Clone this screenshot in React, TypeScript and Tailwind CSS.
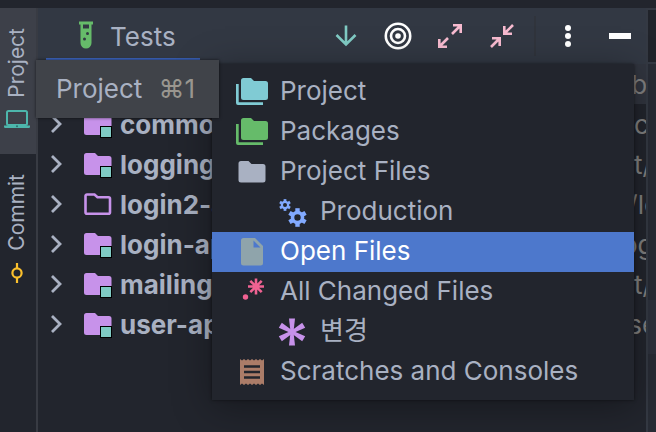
import { clsx } from "clsx"
import type { ReactNode } from "react"

const PurpleFolderIcon = ({ isOutlined = false }: { isOutlined?: boolean }) => (
  <svg width="28" height="28" viewBox="0 0 28 28" className="shrink-0" aria-hidden="true">
    {isOutlined ? (
      <path
        d="M1.500 6a1.500 1.500 0 0 1 1.500-1.500h7.500l3 2.700H24.500a1.500 1.500 0 0 1 1.500 1.500v13.500a1.500 1.500 0 0 1-1.500 1.500H3a1.500 1.500 0 0 1-1.500-1.500z"
        fill="none"
        stroke="#c792ea"
        strokeWidth="2.600"
      />
    ) : (
      <>
        <path
          d="M0 5.500a2.500 2.500 0 0 1 2.500-2.500H11l3 3h11a2.500 2.500 0 0 1 2.500 2.500v14a2.500 2.500 0 0 1-2.500 2.500H2.500a2.500 2.500 0 0 1-2.500-2.500z"
          fill="#c792ea"
        />
        <rect x="16.500" y="16.500" width="11" height="11" fill="#80cbc4" stroke="#000" />
      </>
    )}
  </svg>
)

const StackedFoldersIcon = ({ color }: { color: string }) => (
  <svg width="32" height="32" viewBox="0 0 32 32" fill={color} aria-hidden="true">
    <path d="M5 4.500A2.500 2.500 0 0 1 7.500 2H15l3 3h11.500A2.500 2.500 0 0 1 32 7.500v14a2.500 2.500 0 0 1-2.500 2.500h-22A2.500 2.500 0 0 1 5 21.500z" />
    <path d="M0 8h2.700v18.300H27V29H2a2 2 0 0 1-2-2z" />
  </svg>
)

const PlainFolderIcon = () => (
  <svg width="32" height="32" viewBox="0 0 32 32" fill="#a9b1c2" aria-hidden="true">
    <path d="M2.500 7.500A2.500 2.500 0 0 1 5 5h7.500l3 3H27a2.500 2.500 0 0 1 2.500 2.500V24a2.500 2.500 0 0 1-2.500 2.500H5A2.500 2.500 0 0 1 2.500 24z" />
  </svg>
)

const Gear = ({ x, y, scale }: { x: number; y: number; scale: number }) => (
  <g transform={`translate(${x} ${y}) scale(${scale})`} stroke="#82aaff" fill="none">
    <circle r="5" strokeWidth="3.600" />
    {[0, 60, 120, 180, 240, 300].map((angle) => (
      <path key={angle} d="M0-5.500V-9.300" strokeWidth="4.400" transform={`rotate(${angle})`} />
    ))}
  </g>
)

const GearsIcon = () => (
  <svg width="32" height="32" viewBox="0 0 32 32" aria-hidden="true">
    <Gear x={9} y={9} scale={0.63} />
    <Gear x={21.5} y={21.5} scale={1} />
  </svg>
)

const FileIcon = () => (
  <svg width="32" height="32" viewBox="0 0 32 32" fill="#8fa4ab" aria-hidden="true">
    <path
      fillRule="evenodd"
      d="M5 4.500A2.500 2.500 0 0 1 7.500 2H19l8 8v17a2.500 2.500 0 0 1-2.500 2.500h-17A2.500 2.500 0 0 1 5 27zM17.500 4.500V11.500H24.500z"
    />
  </svg>
)

const ChangedFilesIcon = () => (
  <svg width="32" height="32" viewBox="0 0 32 32" aria-hidden="true">
    <g stroke="#f06292" strokeWidth="2.600">
      <path d="M20 2.500v16M12 10.500h16M14.300 4.800l11.400 11.400M25.700 4.800L14.300 16.200" />
    </g>
    <circle cx="9.500" cy="21" r="2.700" fill="#f06292" />
  </svg>
)

const AsteriskIcon = () => (
  <svg width="32" height="32" viewBox="0 0 32 32" fill="#c792ea" aria-hidden="true">
    {[0, 60, 120, 180, 240, 300].map((angle) => (
      <path key={angle} d="M14.500 16L13 2.500h6L17.500 16z" transform={`rotate(${angle} 16 16)`} />
    ))}
  </svg>
)

const ReceiptIcon = () => (
  <svg width="32" height="32" viewBox="0 0 32 32" aria-hidden="true">
    <path
      fill="#ab7c68"
      d="M4 3l2 1.500L8 3l2 1.500L12 3l2 1.500L16 3l2 1.500L20 3l2 1.500L24 3l2 1.500L28 3v26l-2-1.500L24 29l-2-1.500L20 29l-2-1.500L16 29l-2-1.500L12 29l-2-1.500L8 29l-2-1.500L4 29z"
    />
    <path d="M8 10.500h16M8 16h16M8 21.500h16" stroke="#22252d" strokeWidth="2.400" />
  </svg>
)

const TestTubeIcon = () => (
  <svg width="16" height="28" viewBox="0 0 16 28" aria-hidden="true">
    <path
      fill="#66bb6a"
      fillRule="evenodd"
      d="M1 .5h14v3h-1.500V22a5.500 5.500 0 0 1-11 0V3.500H1zM5 3.500v4h6v-4z"
    />
    <circle cx="9.500" cy="12.500" r="1.500" fill="#323843" />
    <circle cx="6.500" cy="18" r="1.500" fill="#323843" />
  </svg>
)

const LaptopIcon = () => (
  <svg width="26" height="20" viewBox="0 0 26 20" aria-hidden="true">
    <rect x="3" y="1" width="20" height="14" rx="1.500" fill="none" stroke="#4db6ac" strokeWidth="2" />
    <path d="M0 15.500h26v1.200a1.200 1.200 0 0 1-1.200 1.200H1.200A1.200 1.200 0 0 1 0 16.700z" fill="#4db6ac" />
    <circle cx="13" cy="16.300" r="1" fill="#2b6f6c" />
  </svg>
)

const CommitIcon = () => (
  <svg width="20" height="20" viewBox="0 0 20 20" fill="none" stroke="#fbc02d" strokeWidth="2.200" aria-hidden="true">
    <circle cx="10" cy="10" r="4.600" />
    <path d="M10 0v5.400M10 14.600V20" />
  </svg>
)

const ChevronIcon = () => (
  <svg width="12" height="20" viewBox="0 0 12 20" fill="none" stroke="#a9b1c2" strokeWidth="2.800" aria-hidden="true">
    <path d="M2 2l8 8-8 8" />
  </svg>
)

const ArrowDownIcon = () => (
  <svg width="24" height="24" viewBox="0 0 24 24" fill="none" stroke="#80cbc4" strokeWidth="2.600" aria-hidden="true">
    <path d="M12 1.500v19M2.500 11l9.500 9.500 9.500-9.500" />
  </svg>
)

const TargetIcon = () => (
  <svg width="28" height="28" viewBox="0 0 28 28" fill="none" stroke="#fff" strokeWidth="2.600" aria-hidden="true">
    <circle cx="14" cy="14" r="12.200" />
    <circle cx="14" cy="14" r="7" />
    <circle cx="14" cy="14" r="2.800" fill="#fff" stroke="none" />
  </svg>
)

const ExpandIcon = () => (
  <svg width="24" height="24" viewBox="0 0 24 24" fill="none" stroke="#f8bbd0" strokeWidth="2.600" aria-hidden="true">
    <path d="M15 1.300h7.700V9M22 2l-8 8M1.300 15v7.700H9M2 22l8-8" />
  </svg>
)

const CollapseIcon = () => (
  <svg width="24" height="24" viewBox="0 0 24 24" fill="none" stroke="#f8bbd0" strokeWidth="2.600" aria-hidden="true">
    <path d="M14.300 2v7.700H22M15 9l8-8M2 14.300h7.700V22M9 15l-8 8" />
  </svg>
)

const MoreIcon = () => (
  <svg width="24" height="24" viewBox="0 0 24 24" fill="#fff" aria-hidden="true">
    <circle cx="12" cy="4" r="3" />
    <circle cx="12" cy="12" r="3" />
    <circle cx="12" cy="20" r="3" />
  </svg>
)

const MinimizeIcon = () => (
  <svg width="24" height="24" viewBox="0 0 24 24" fill="#fff" aria-hidden="true">
    <path d="M1 9h22v6H1z" />
  </svg>
)

type ToolButtonProps = { label: string; icon: ReactNode }

const ToolButton = ({ label, icon }: ToolButtonProps) => (
  <button type="button" aria-label={label} className="flex h-full w-13 items-center justify-center">
    {icon}
  </button>
)

type ModuleRow = { name: string; path: string; isOutlined?: boolean; isIndented?: boolean }

const modules: ModuleRow[] = [
  { name: "", path: "/b" },
  { name: "common", path: "c", isIndented: true },
  { name: "logging", path: "t/", isIndented: true },
  { name: "login2-api", path: "i/lo", isOutlined: true },
  { name: "login-api", path: "og" },
  { name: "mailing", path: "t/", isIndented: true },
  { name: "user-api", path: "ise" },
]

type ViewOption = { label: string; icon: ReactNode; isNested?: boolean; isActive?: boolean }

const viewOptions: ViewOption[] = [
  { label: "Project", icon: <StackedFoldersIcon color="#80cbd4" /> },
  { label: "Packages", icon: <StackedFoldersIcon color="#66bb6a" /> },
  { label: "Project Files", icon: <PlainFolderIcon /> },
  { label: "Production", icon: <GearsIcon />, isNested: true },
  { label: "Open Files", icon: <FileIcon />, isActive: true },
  { label: "All Changed Files", icon: <ChangedFilesIcon /> },
  { label: "변경", icon: <AsteriskIcon />, isNested: true },
  { label: "Scratches and Consoles", icon: <ReceiptIcon /> },
]

const ToolWindowBar = () => (
  <nav className="flex w-[38px] shrink-0 flex-col border-r-2 border-[#383b43] text-[21px] leading-6">
    <button
      type="button"
      className="flex h-[146px] flex-col items-center justify-end gap-3 bg-[#3d4049] pr-0.5 pb-6"
    >
      <span className="rotate-180 [writing-mode:vertical-rl]">Project</span>
      <LaptopIcon />
    </button>
    <button type="button" className="flex flex-col items-center gap-3 pt-5 pr-0.5">
      <span className="rotate-180 [writing-mode:vertical-rl]">Commit</span>
      <CommitIcon />
    </button>
  </nav>
)

const PanelHeader = () => (
  <header className="flex h-14 items-stretch justify-between bg-[#323843]">
    <button
      type="button"
      className="mb-1 ml-2 flex items-center gap-4 border-b-2 border-[#3b62b9] pt-1 pr-6 pl-8 text-[26px] leading-8"
    >
      <TestTubeIcon />
      <span className="pt-1">Tests</span>
    </button>
    <div className="flex items-center">
      <ToolButton label="Scroll to end" icon={<ArrowDownIcon />} />
      <ToolButton label="Select opened file" icon={<TargetIcon />} />
      <ToolButton label="Expand all" icon={<ExpandIcon />} />
      <ToolButton label="Collapse all" icon={<CollapseIcon />} />
      <span className="mx-1.5 h-10 w-0.5 bg-[#30343c]" />
      <ToolButton label="Options" icon={<MoreIcon />} />
      <ToolButton label="Hide" icon={<MinimizeIcon />} />
    </div>
  </header>
)

const ModuleTree = () => (
  <ul className="text-[26px] leading-8">
    {modules.map(({ name, path, isOutlined, isIndented }) => (
      <li
        key={name}
        className={clsx("flex h-10 items-center justify-between", !name && "bg-[#31353f]")}
      >
        <div className="flex items-center pl-3 font-bold">
          {name && (
            <>
              <ChevronIcon />
              <span className="flex items-center gap-2 pl-[22px]">
                <PurpleFolderIcon isOutlined={isOutlined} />
                <span className="pt-0.5">{name}</span>
              </span>
            </>
          )}
        </div>
        <span className={clsx("w-6 overflow-hidden pt-0.5 text-[#808080]", isIndented && "pl-3")}>
          {path}
        </span>
      </li>
    ))}
  </ul>
)

const ViewMenu = () => (
  <div
    role="menu"
    className="absolute top-16 right-[22px] left-[212px] bg-[#22252d] py-2 shadow-[0_6px_36px_rgba(0,0,0,0.35),0_0_3px_rgba(0,0,0,0.5)]"
  >
    {viewOptions.map(({ label, icon, isNested, isActive }) => (
      <button
        key={label}
        type="button"
        role="menuitem"
        className={clsx(
          "flex h-10 w-full items-center gap-3 text-left text-[26px] leading-8",
          isNested ? "pl-16" : "pl-6",
          isActive && "bg-[#4d78cc] text-white",
        )}
      >
        {icon}
        <span className="pb-0.5">{label}</span>
      </button>
    ))}
  </div>
)

export default function App() {
  return (
    <div className="relative flex h-screen flex-col overflow-hidden bg-[#22252d] font-['Inter','Noto_Sans_CJK_KR',sans-serif] text-[#a9b1c2]">
      <div className="h-2 shrink-0" />

      <div className="flex min-h-0 flex-1">
        <ToolWindowBar />

        <main className="min-w-0 flex-1">
          <PanelHeader />
          <ModuleTree />
        </main>

        {/* Edge of the editor area */}
        <aside className="flex w-2.5 shrink-0 flex-col border-t-2 border-l-2 border-[#343943] bg-[#282c35]">
          <div className="h-[54px] border-b-2 border-[#343943] bg-[#20232a]" />
          <div className="mt-[236px] h-[54px] bg-[#2d313c]" />
        </aside>
      </div>

      <ViewMenu />

      <div
        role="tooltip"
        className="absolute top-[60px] left-9 flex h-[58px] items-center gap-4 bg-[#404349] pr-6 pl-5 text-[26px] leading-8 shadow-[0_0_3px_rgba(0,0,0,0.6)]"
      >
        Project
        <kbd className="font-[inherit] text-[#99968f]">⌘1</kbd>
      </div>
    </div>
  )
}
